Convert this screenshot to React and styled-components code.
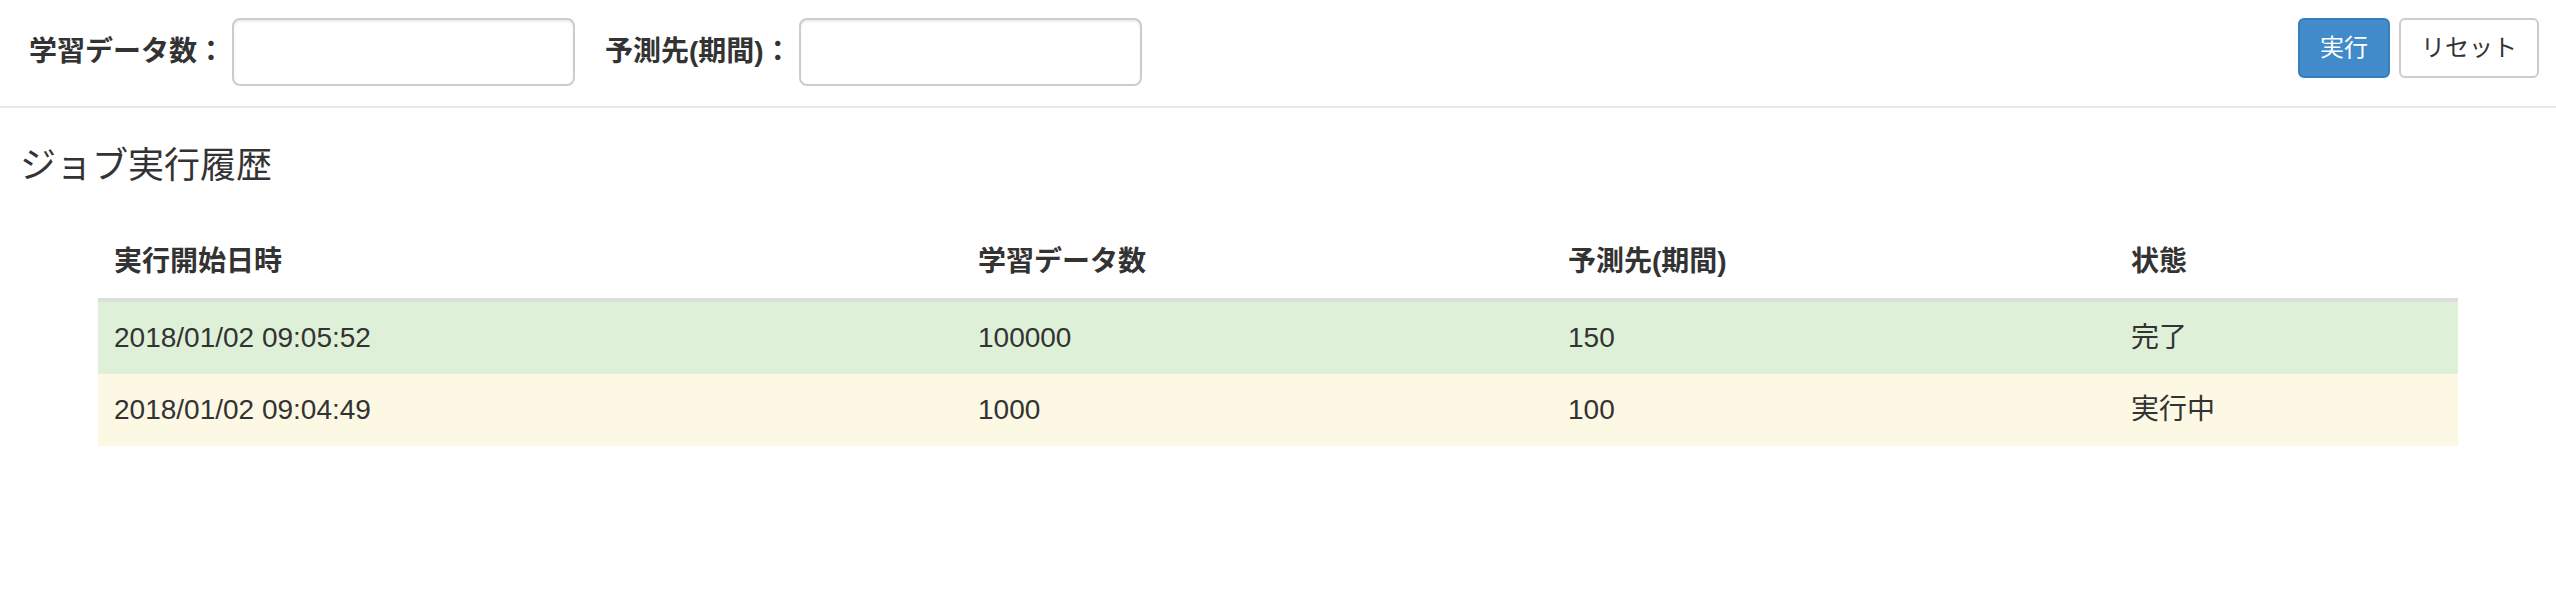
import styled, { createGlobalStyle } from 'styled-components'

const GlobalStyle = createGlobalStyle`
  html, body {
    margin: 0;
    padding: 0;
    background: #fff;
  }
  body {
    font-family: "Liberation Sans", "Noto Sans CJK JP", sans-serif;
    font-size: 28px;
    line-height: 40px;
    color: #333;
  }
  * {
    box-sizing: border-box;
  }
`

const TopBar = styled.div`
  display: flex;
  align-items: flex-start;
  height: 108px;
  padding: 18px 17px 0 29px;
  border-bottom: 2px solid #e7e7e7;
`

const Field = styled.div`
  display: flex;
  align-items: center;
  height: 68px;
  margin-right: 30px;
`

const FieldLabel = styled.label`
  font-weight: bold;
  margin-right: 7px;
  white-space: nowrap;
`

const TextInput = styled.input`
  width: 343px;
  height: 68px;
  padding: 12px 24px;
  font: inherit;
  color: #555;
  background: #fff;
  border: 2px solid #ccc;
  border-radius: 8px;
  box-shadow: inset 0 2px 2px rgba(0, 0, 0, 0.075);
  outline: none;
`

const Actions = styled.div`
  display: flex;
  gap: 9px;
  margin-left: auto;
`

const Button = styled.button`
  height: 60px;
  padding: 10px 20px;
  font-family: inherit;
  font-size: 24px;
  line-height: 36px;
  border-radius: 6px;
  border: 2px solid ${p => (p.$primary ? '#357ebd' : '#ccc')};
  background: ${p => (p.$primary ? '#428bca' : '#fff')};
  color: ${p => (p.$primary ? '#fff' : '#333')};
  cursor: pointer;
`

const Main = styled.div`
  padding: 38px 20px 0;
`

const Heading = styled.h4`
  margin: 0 0 40px;
  font-size: 36px;
  line-height: 40px;
  font-weight: 400;
`

const TableWrap = styled.div`
  padding: 0 78px;
`

const Table = styled.table`
  width: 100%;
  border-collapse: collapse;
  table-layout: fixed;
`

const HeadCell = styled.th`
  width: ${p => p.$width}px;
  padding: 16px;
  text-align: left;
  font-weight: bold;
  vertical-align: bottom;
  border-bottom: 4px solid #ddd;
`

const Row = styled.tr`
  background: ${p => (p.$state === 'done' ? '#dff0d8' : '#fcf8e3')};

  & + & td {
    border-top: 2px solid #ddd;
  }
`

const Cell = styled.td`
  padding: 16px;
  vertical-align: top;
`

const columns = [
  { title: '実行開始日時', width: 864 },
  { title: '学習データ数', width: 590 },
  { title: '予測先(期間)', width: 563 },
  { title: '状態', width: 343 },
]

const jobs = [
  { started: '2018/01/02 09:05:52', count: '100000', period: '150', status: '完了', state: 'done' },
  { started: '2018/01/02 09:04:49', count: '1000', period: '100', status: '実行中', state: 'running' },
]

const App = () => {
  return (
    <>
      <GlobalStyle />
      <TopBar>
        <Field>
          <FieldLabel>学習データ数：</FieldLabel>
          <TextInput type="text" />
        </Field>
        <Field>
          <FieldLabel>予測先(期間)：</FieldLabel>
          <TextInput type="text" />
        </Field>
        <Actions>
          <Button $primary>実行</Button>
          <Button>リセット</Button>
        </Actions>
      </TopBar>

      <Main>
        <Heading>ジョブ実行履歴</Heading>
        <TableWrap>
          <Table>
            <thead>
              <tr>
                {columns.map(c => (
                  <HeadCell key={c.title} $width={c.width}>{c.title}</HeadCell>
                ))}
              </tr>
            </thead>
            <tbody>
              {jobs.map(job => (
                <Row key={job.started} $state={job.state}>
                  <Cell>{job.started}</Cell>
                  <Cell>{job.count}</Cell>
                  <Cell>{job.period}</Cell>
                  <Cell>{job.status}</Cell>
                </Row>
              ))}
            </tbody>
          </Table>
        </TableWrap>
      </Main>
    </>
  )
}

export default App
